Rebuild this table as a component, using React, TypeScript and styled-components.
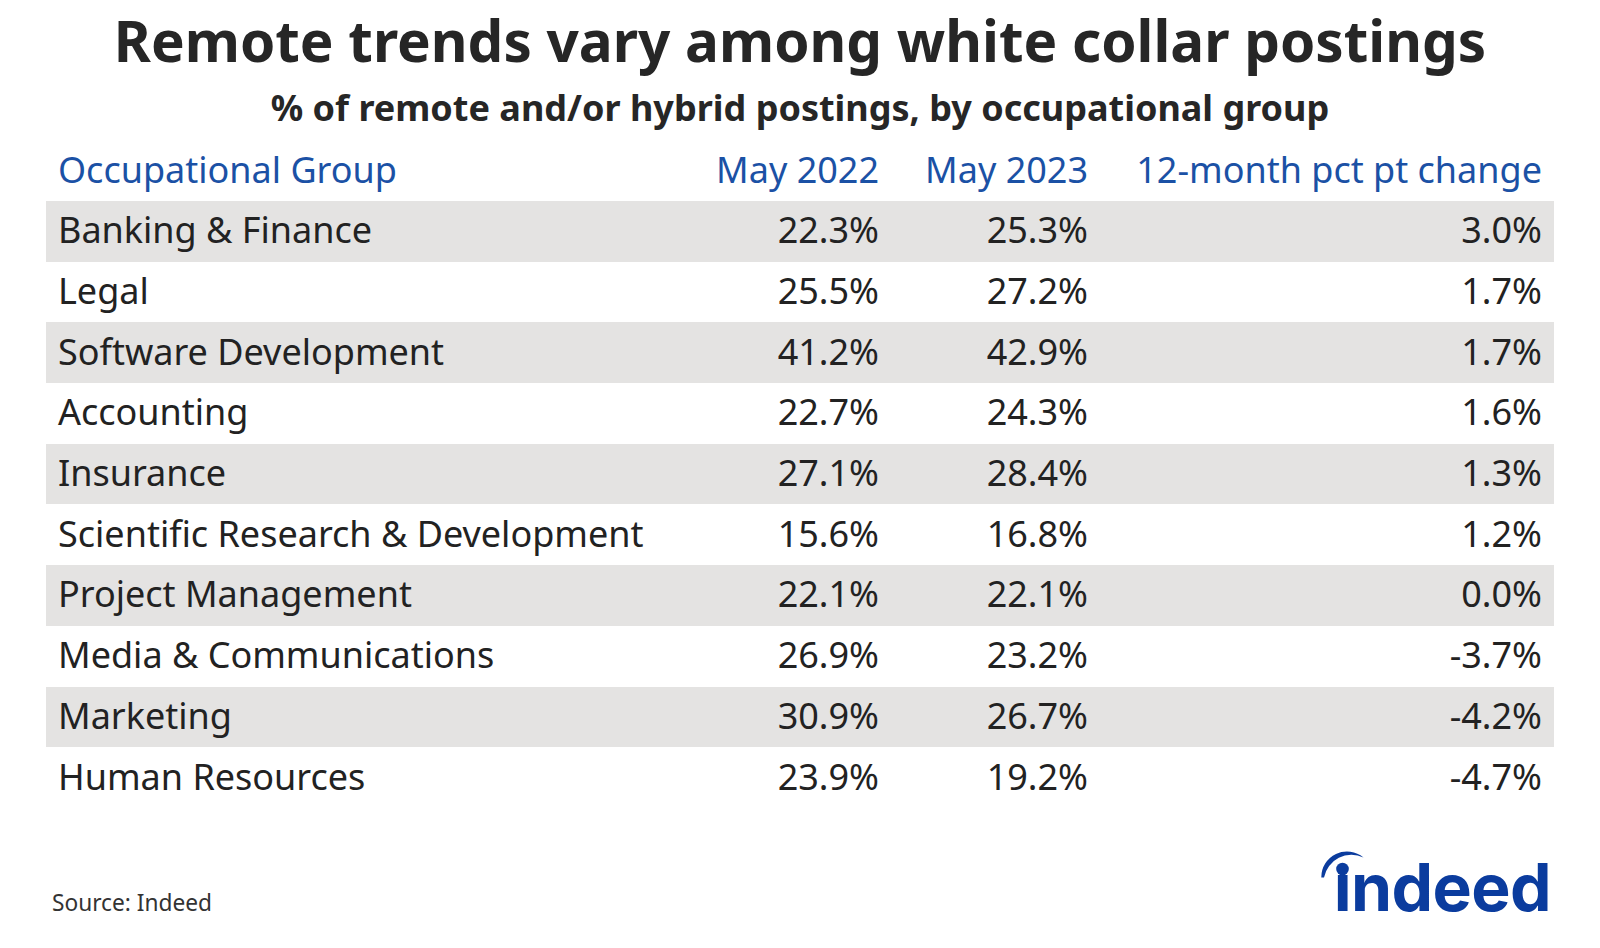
import styled, { createGlobalStyle } from 'styled-components';

type Row = {
  group: string;
  may2022: string;
  may2023: string;
  change: string;
};

const rows: Row[] = [
  { group: 'Banking & Finance', may2022: '22.3%', may2023: '25.3%', change: '3.0%' },
  { group: 'Legal', may2022: '25.5%', may2023: '27.2%', change: '1.7%' },
  { group: 'Software Development', may2022: '41.2%', may2023: '42.9%', change: '1.7%' },
  { group: 'Accounting', may2022: '22.7%', may2023: '24.3%', change: '1.6%' },
  { group: 'Insurance', may2022: '27.1%', may2023: '28.4%', change: '1.3%' },
  { group: 'Scientific Research & Development', may2022: '15.6%', may2023: '16.8%', change: '1.2%' },
  { group: 'Project Management', may2022: '22.1%', may2023: '22.1%', change: '0.0%' },
  { group: 'Media & Communications', may2022: '26.9%', may2023: '23.2%', change: '-3.7%' },
  { group: 'Marketing', may2022: '30.9%', may2023: '26.7%', change: '-4.2%' },
  { group: 'Human Resources', may2022: '23.9%', may2023: '19.2%', change: '-4.7%' },
];

const App = () => {
  return (
    <>
      <GlobalStyle />
      <Page>
        <Title>Remote trends vary among white collar postings</Title>
        <Subtitle>% of remote and/or hybrid postings, by occupational group</Subtitle>

        <Table>
          <HeaderRow>
            <HeadCell>Occupational Group</HeadCell>
            <HeadCell $right>May 2022</HeadCell>
            <HeadCell $right>May 2023</HeadCell>
            <HeadCell $right>12-month pct pt change</HeadCell>
          </HeaderRow>

          {rows.map((row, i) => (
            <DataRow key={row.group} $shaded={i % 2 === 0}>
              <Cell>{row.group}</Cell>
              <Cell $right>{row.may2022}</Cell>
              <Cell $right>{row.may2023}</Cell>
              <Cell $right>{row.change}</Cell>
            </DataRow>
          ))}
        </Table>

        <Footer>
          <Source>Source: Indeed</Source>
          <Logo>
            {/* swoosh + dot over the i */}
            <LogoMark viewBox="0 0 56 36" aria-hidden>
              <path d="M7.3 28.5 A25.7 25.7 0 0 1 49.5 8.5 A28 28 0 0 0 10 28.5 Z" fill="currentColor" />
              <circle cx="28.5" cy="20" r="6.3" fill="currentColor" />
            </LogoMark>
            <LogoWord>ındeed</LogoWord>
          </Logo>
        </Footer>
      </Page>
    </>
  );
};

const GlobalStyle = createGlobalStyle`
  html, body {
    margin: 0;
    padding: 0;
    background: #ffffff;
  }

  body {
    font-family: 'Noto Sans', 'Open Sans', sans-serif;
    color: #222222;
  }
`;

const Page = styled.div`
  width: 1600px;
  height: 948px;
  padding-top: 6px;
  box-sizing: border-box;
  display: flex;
  flex-direction: column;
`;

const Title = styled.h1`
  margin: 0;
  font-size: 56.6px;
  line-height: 68px;
  font-weight: 700;
  color: #262626;
  text-align: center;
`;

const Subtitle = styled.h2`
  margin: 13px 0 0;
  font-size: 36px;
  line-height: 42px;
  font-weight: 700;
  color: #262626;
  text-align: center;
`;

const Table = styled.div`
  margin: 12px 46px 0;
  display: flex;
  flex-direction: column;
`;

const rowGrid = `
  display: grid;
  grid-template-columns: 1fr 200px 209px 454px;
  align-items: center;
`;

const HeaderRow = styled.div`
  ${rowGrid}
  height: 60px;
  padding-bottom: 3px;
  box-sizing: border-box;
`;

const DataRow = styled.div<{ $shaded: boolean }>`
  ${rowGrid}
  height: 60.7px;
  padding-bottom: 2px;
  box-sizing: border-box;
  background: ${({ $shaded }) => ($shaded ? '#e4e3e2' : 'transparent')};
`;

const Cell = styled.div<{ $right?: boolean }>`
  padding: 0 12px;
  font-size: 36px;
  line-height: 48px;
  color: #222222;
  white-space: nowrap;
  text-align: ${({ $right }) => ($right ? 'right' : 'left')};
`;

const HeadCell = styled(Cell)`
  color: #1b51a5;
`;

const Footer = styled.div`
  margin-top: auto;
  padding: 0 49px 28px 52px;
  display: flex;
  justify-content: space-between;
  align-items: baseline;
`;

const Source = styled.span`
  font-size: 22.7px;
  line-height: 30px;
  color: #333333;
`;

const Logo = styled.div`
  position: relative;
  color: #0b3c9e;
`;

const LogoMark = styled.svg`
  position: absolute;
  left: -20px;
  top: -5px;
  width: 56px;
  height: 36px;
`;

const LogoWord = styled.span`
  display: block;
  font-family: 'Inter', 'Lato', sans-serif;
  font-weight: 700;
  font-size: 66px;
  line-height: 66px;
  letter-spacing: -0.6px;
`;

export default App;
